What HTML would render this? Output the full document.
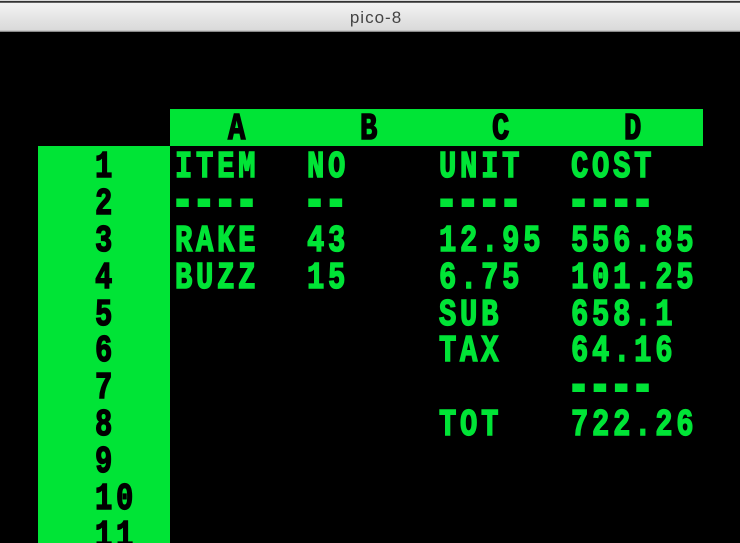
<!DOCTYPE html>
<html>
<head>
<meta charset="utf-8">
<style>
html,body{margin:0;padding:0;background:#000}
#app{position:relative;width:740px;height:543px;overflow:hidden;background:#000}
#bar{position:absolute;left:0;top:0;width:740px;height:32px;background:linear-gradient(#d8d8d8 0,#d8d8d8 1px,#333 1px,#333 2.5px,#f3f3f3 3px,#d9d9d9 30.5px,#8a8a8a 31px,#8a8a8a 32px)}
#title{position:absolute;left:326px;top:8px;width:100px;text-align:center;font:17px/20px "Liberation Sans",sans-serif;letter-spacing:1px;color:#444}
.g{position:absolute;background:#00e436}
.t{position:absolute;font:bold 38px/40px "Liberation Mono",monospace;letter-spacing:4.9px;transform:scaleX(.76);transform-origin:0 0;white-space:pre;color:#00e436;-webkit-text-stroke:1.5px #00e436;text-rendering:geometricPrecision}
.k{color:#000;-webkit-text-stroke:1.5px #000}
.d{position:absolute;font:bold 38px/40px "Liberation Mono",monospace;letter-spacing:-3.41px;transform:scale(1.1,1.65);transform-origin:0 0;white-space:pre;color:#00e436;-webkit-text-stroke:.6px #00e436;text-rendering:geometricPrecision}
</style>
</head>
<body>
<div id="app">
<div id="bar"></div>
<div id="title">pico-8</div>
<div class="g" style="left:170px;top:109px;width:533px;height:37px"></div>
<div class="g" style="left:38px;top:146px;width:132px;height:397px"></div>

<span class="t k" style="left:228px;top:110px">A</span>
<span class="t k" style="left:360px;top:110px">B</span>
<span class="t k" style="left:492px;top:110px">C</span>
<span class="t k" style="left:624px;top:110px">D</span>

<span class="t k" style="left:95px;top:148px">1</span>
<span class="t k" style="left:95px;top:185px">2</span>
<span class="t k" style="left:95px;top:222px">3</span>
<span class="t k" style="left:95px;top:259px">4</span>
<span class="t k" style="left:95px;top:296px">5</span>
<span class="t k" style="left:95px;top:332px">6</span>
<span class="t k" style="left:95px;top:369px">7</span>
<span class="t k" style="left:95px;top:406px">8</span>
<span class="t k" style="left:95px;top:443px">9</span>
<span class="t k" style="left:95px;top:480px">10</span>
<span class="t k" style="left:95px;top:517px">11</span>

<span class="t" style="left:174.5px;top:148px">ITEM</span>
<span class="t" style="left:306.5px;top:148px">NO</span>
<span class="t" style="left:438.5px;top:148px">UNIT</span>
<span class="t" style="left:570.5px;top:148px">COST</span>

<span class="d" style="left:170px;top:171px">----</span>
<span class="d" style="left:302px;top:171px">--</span>
<span class="d" style="left:434px;top:171px">----</span>
<span class="d" style="left:566px;top:171px">----</span>

<span class="t" style="left:174.5px;top:222px">RAKE</span>
<span class="t" style="left:306.5px;top:222px">43</span>
<span class="t" style="left:438.5px;top:222px">12.95</span>
<span class="t" style="left:570.5px;top:222px">556.85</span>

<span class="t" style="left:174.5px;top:259px">BUZZ</span>
<span class="t" style="left:306.5px;top:259px">15</span>
<span class="t" style="left:438.5px;top:259px">6.75</span>
<span class="t" style="left:570.5px;top:259px">101.25</span>

<span class="t" style="left:438.5px;top:296px">SUB</span>
<span class="t" style="left:570.5px;top:296px">658.1</span>

<span class="t" style="left:438.5px;top:332px">TAX</span>
<span class="t" style="left:570.5px;top:332px">64.16</span>

<span class="d" style="left:566px;top:356px">----</span>

<span class="t" style="left:438.5px;top:406px">TOT</span>
<span class="t" style="left:570.5px;top:406px">722.26</span>
</div>
</body>
</html>
